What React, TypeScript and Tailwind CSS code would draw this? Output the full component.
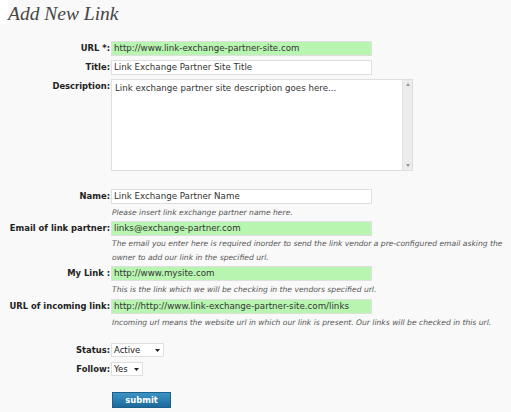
import React from 'react';

const labelCls =
  "w-[111px] shrink-0 pr-[1px] text-right text-[8.4px] leading-[15px] font-bold text-[#222] whitespace-nowrap";
const inputCls =
  "h-[15px] border border-[#dfdfdf] px-[2px] text-[8.7px] leading-[13px] text-[#333] whitespace-nowrap overflow-hidden";
const hintCls = "ml-[112px] text-[7.6px] leading-[14px] italic text-[#555]";

const Field: React.FC<{ label: string; value: string; green?: boolean; className?: string }> = ({
  label,
  value,
  green,
  className = "",
}) => (
  <div className={`flex items-start ${className}`}>
    <div className={labelCls}>{label}</div>
    <div className={`${inputCls} w-[261px] ${green ? "bg-[#b8f5b0] border-[#b8f5b0]" : "bg-white"}`}>
      {value}
    </div>
  </div>
);

const Select: React.FC<{ label: string; value: string; width: string; className?: string }> = ({
  label,
  value,
  width,
  className = "",
}) => (
  <div className={`flex h-[14px] items-start ${className}`}>
    <div className={labelCls}>{label}</div>
    <div
      className={`${width} h-[14px] flex items-center justify-between border border-[#dfdfdf] bg-white pl-[2px] pr-[3px] text-[8.5px] text-[#222]`}
    >
      <span>{value}</span>
      <svg width="5" height="3" viewBox="0 0 5 3">
        <path d="M0 0 L5 0 L2.5 3 Z" fill="#222" />
      </svg>
    </div>
  </div>
);

export default function App() {
  return (
    <div
      className="min-h-[412px] w-[511px] bg-[#f9f9f9] overflow-hidden"
      style={{ fontFamily: '"DejaVu Sans", Verdana, sans-serif' }}
    >
      {/* Header */}
      <div className="flex h-[41px] items-start">
        <div className="h-[24px] w-[8px] bg-white" />
        <h2
          className="mt-[1px] text-[19.5px] leading-[26px] italic text-[#464646]"
          style={{ fontFamily: '"Liberation Serif", Georgia, serif' }}
        >
          Add New Link
        </h2>
      </div>

      <Field label="URL *:" value="http://www.link-exchange-partner-site.com" green />
      <Field label="Title:" value="Link Exchange Partner Site Title" className="mt-[4px]" />

      {/* Description */}
      <div className="mt-[4px] flex items-start">
        <div className={labelCls}>Description:</div>
        <div className="flex h-[92px] w-[302px] border border-[#dfdfdf] bg-white">
          <div className="flex-1 px-[3px] pt-[2px] text-[8.7px] leading-[12px] text-[#333]">
            Link exchange partner site description goes here...
          </div>
          <div className="flex w-[10px] flex-col items-center justify-between border-l border-[#e2e2e2] bg-[#ececec] py-[3px]">
            <svg width="4" height="3" viewBox="0 0 4 3">
              <path d="M0 3 L4 3 L2 0 Z" fill="#999" />
            </svg>
            <svg width="4" height="3" viewBox="0 0 4 3">
              <path d="M0 0 L4 0 L2 3 Z" fill="#999" />
            </svg>
          </div>
        </div>
      </div>

      <Field label="Name:" value="Link Exchange Partner Name" className="mt-[18px]" />
      <div className={`${hintCls} mt-[2px]`}>Please insert link exchange partner name here.</div>

      <Field label="Email of link partner:" value="links@exchange-partner.com" green className="mt-[1px]" />
      <div className={`${hintCls} mt-[1px]`}>
        The email you enter here is required inorder to send the link vendor a pre-configured email asking the
        owner to add our link in the specified url.
      </div>

      <Field label="My Link :" value="http://www.mysite.com" green className="mt-[1px]" />
      <div className={`${hintCls} mt-[2px]`}>This is the link which we will be checking in the vendors specified url.</div>

      <Field
        label="URL of incoming link:"
        value="http://http://www.link-exchange-partner-site.com/links"
        green
        className="mt-[2px]"
      />
      <div className={`${hintCls} mt-[2px]`}>
        Incoming url means the website url in which our link is present. Our links will be checked in this url.
      </div>

      <Select label="Status:" value="Active" width="w-[53px]" className="mt-[13px]" />
      <Select label="Follow:" value="Yes" width="w-[32px]" className="mt-[5px]" />

      <div className="ml-[112px] mt-[16px] flex pb-[4px]">
        <button className="h-[16px] w-[59px] border border-[#1b5f8a] bg-gradient-to-b from-[#3d93c6] to-[#1c6a9b] text-[8.4px] leading-[14px] font-bold text-white">
          submit
        </button>
      </div>
    </div>
  );
}
